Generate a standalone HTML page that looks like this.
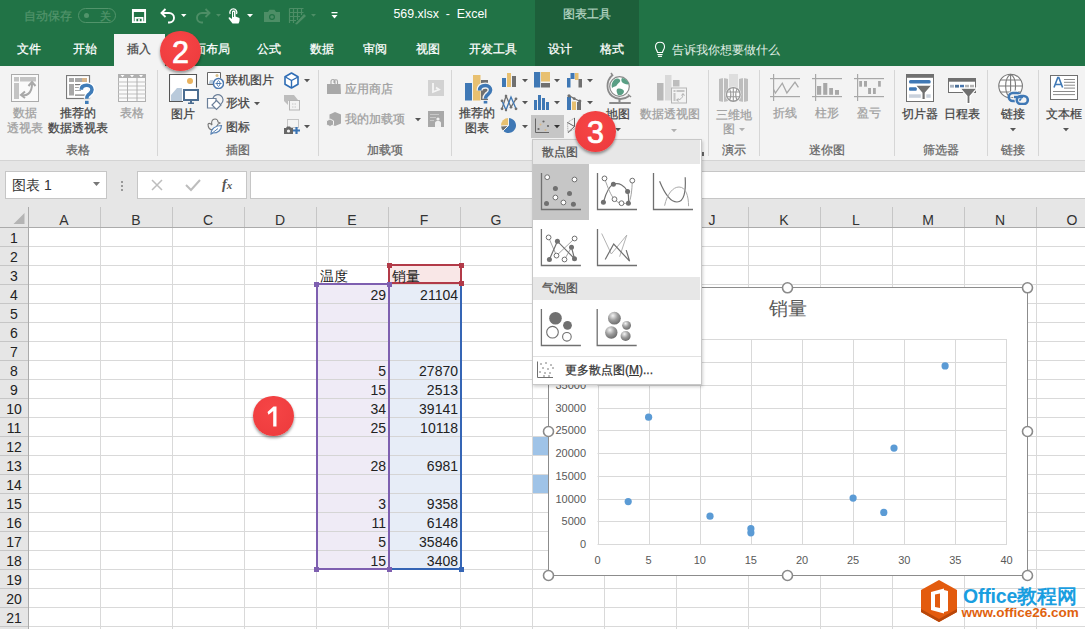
<!DOCTYPE html><html><head><meta charset="utf-8"><style>html,body{margin:0;padding:0;}
body{width:1085px;height:629px;overflow:hidden;position:relative;background:#e6e6e6;font-family:"Liberation Sans", sans-serif;}
.t{position:absolute;white-space:nowrap;line-height:1;}
.s{-webkit-text-stroke:0.25px currentColor;}
.a{position:absolute;}
</style></head><body><div class="a" style="left:0;top:0;width:1085px;height:66px;background:#217346"></div><div class="a" style="left:535px;top:0;width:104px;height:66px;background:#1d5f3a"></div><div class="a" style="left:114px;top:34px;width:51px;height:32px;background:#f3f3f3"></div><div class="a" style="left:0;top:66px;width:1085px;height:94px;background:#f3f3f3"></div><div class="a" style="left:0;top:160px;width:1085px;height:1px;background:#d4d4d4"></div><svg width="1085" height="629" style="position:absolute;left:0;top:0"><rect x="28" y="227" width="1057" height="402" fill="#fff"/><rect x="0" y="207" width="1085" height="20" fill="#e6e6e6"/><rect x="0" y="227" width="28" height="402" fill="#e6e6e6"/><rect x="100" y="227" width="1" height="402" fill="#d9d9d9"/><rect x="100" y="207" width="1" height="20" fill="#c6c6c6"/><rect x="172" y="227" width="1" height="402" fill="#d9d9d9"/><rect x="172" y="207" width="1" height="20" fill="#c6c6c6"/><rect x="244" y="227" width="1" height="402" fill="#d9d9d9"/><rect x="244" y="207" width="1" height="20" fill="#c6c6c6"/><rect x="316" y="227" width="1" height="402" fill="#d9d9d9"/><rect x="316" y="207" width="1" height="20" fill="#c6c6c6"/><rect x="388" y="227" width="1" height="402" fill="#d9d9d9"/><rect x="388" y="207" width="1" height="20" fill="#c6c6c6"/><rect x="460" y="227" width="1" height="402" fill="#d9d9d9"/><rect x="460" y="207" width="1" height="20" fill="#c6c6c6"/><rect x="532" y="227" width="1" height="402" fill="#d9d9d9"/><rect x="532" y="207" width="1" height="20" fill="#c6c6c6"/><rect x="604" y="227" width="1" height="402" fill="#d9d9d9"/><rect x="604" y="207" width="1" height="20" fill="#c6c6c6"/><rect x="676" y="227" width="1" height="402" fill="#d9d9d9"/><rect x="676" y="207" width="1" height="20" fill="#c6c6c6"/><rect x="748" y="227" width="1" height="402" fill="#d9d9d9"/><rect x="748" y="207" width="1" height="20" fill="#c6c6c6"/><rect x="820" y="227" width="1" height="402" fill="#d9d9d9"/><rect x="820" y="207" width="1" height="20" fill="#c6c6c6"/><rect x="892" y="227" width="1" height="402" fill="#d9d9d9"/><rect x="892" y="207" width="1" height="20" fill="#c6c6c6"/><rect x="964" y="227" width="1" height="402" fill="#d9d9d9"/><rect x="964" y="207" width="1" height="20" fill="#c6c6c6"/><rect x="1036" y="227" width="1" height="402" fill="#d9d9d9"/><rect x="1036" y="207" width="1" height="20" fill="#c6c6c6"/><rect x="28" y="246" width="1057" height="1" fill="#d9d9d9"/><rect x="0" y="246" width="28" height="1" fill="#c6c6c6"/><rect x="28" y="265" width="1057" height="1" fill="#d9d9d9"/><rect x="0" y="265" width="28" height="1" fill="#c6c6c6"/><rect x="28" y="284" width="1057" height="1" fill="#d9d9d9"/><rect x="0" y="284" width="28" height="1" fill="#c6c6c6"/><rect x="28" y="303" width="1057" height="1" fill="#d9d9d9"/><rect x="0" y="303" width="28" height="1" fill="#c6c6c6"/><rect x="28" y="322" width="1057" height="1" fill="#d9d9d9"/><rect x="0" y="322" width="28" height="1" fill="#c6c6c6"/><rect x="28" y="341" width="1057" height="1" fill="#d9d9d9"/><rect x="0" y="341" width="28" height="1" fill="#c6c6c6"/><rect x="28" y="360" width="1057" height="1" fill="#d9d9d9"/><rect x="0" y="360" width="28" height="1" fill="#c6c6c6"/><rect x="28" y="379" width="1057" height="1" fill="#d9d9d9"/><rect x="0" y="379" width="28" height="1" fill="#c6c6c6"/><rect x="28" y="398" width="1057" height="1" fill="#d9d9d9"/><rect x="0" y="398" width="28" height="1" fill="#c6c6c6"/><rect x="28" y="417" width="1057" height="1" fill="#d9d9d9"/><rect x="0" y="417" width="28" height="1" fill="#c6c6c6"/><rect x="28" y="436" width="1057" height="1" fill="#d9d9d9"/><rect x="0" y="436" width="28" height="1" fill="#c6c6c6"/><rect x="28" y="455" width="1057" height="1" fill="#d9d9d9"/><rect x="0" y="455" width="28" height="1" fill="#c6c6c6"/><rect x="28" y="474" width="1057" height="1" fill="#d9d9d9"/><rect x="0" y="474" width="28" height="1" fill="#c6c6c6"/><rect x="28" y="493" width="1057" height="1" fill="#d9d9d9"/><rect x="0" y="493" width="28" height="1" fill="#c6c6c6"/><rect x="28" y="512" width="1057" height="1" fill="#d9d9d9"/><rect x="0" y="512" width="28" height="1" fill="#c6c6c6"/><rect x="28" y="531" width="1057" height="1" fill="#d9d9d9"/><rect x="0" y="531" width="28" height="1" fill="#c6c6c6"/><rect x="28" y="550" width="1057" height="1" fill="#d9d9d9"/><rect x="0" y="550" width="28" height="1" fill="#c6c6c6"/><rect x="28" y="569" width="1057" height="1" fill="#d9d9d9"/><rect x="0" y="569" width="28" height="1" fill="#c6c6c6"/><rect x="28" y="588" width="1057" height="1" fill="#d9d9d9"/><rect x="0" y="588" width="28" height="1" fill="#c6c6c6"/><rect x="28" y="607" width="1057" height="1" fill="#d9d9d9"/><rect x="0" y="607" width="28" height="1" fill="#c6c6c6"/><rect x="28" y="626" width="1057" height="1" fill="#d9d9d9"/><rect x="0" y="626" width="28" height="1" fill="#c6c6c6"/><rect x="0" y="227" width="1085" height="1" fill="#ababab"/><rect x="28" y="207" width="1" height="422" fill="#ababab"/><polygon points="24.5,213 24.5,224 13.5,224" fill="#b4b4b4"/></svg><div class="t s" style="left:24px;top:16px;font-size:12px;color:#52946b;font-weight:normal;transform:translateY(-50%);">自动保存</div><div class="a" style="left:78px;top:8px;width:38px;height:15px;border:1px solid #52946b;border-radius:9px;box-sizing:border-box"></div><div class="a" style="left:84px;top:13px;width:5px;height:5px;background:#52946b;border-radius:50%"></div><div class="t s" style="left:99.5px;top:16px;font-size:11px;color:#52946b;font-weight:normal;transform:translateY(-50%);">关</div><div class="t" style="left:440.3px;top:13.5px;font-size:12.4px;color:#fff;font-weight:normal;transform:translate(-50%,-50%);">569.xlsx&nbsp; -&nbsp; Excel</div><div class="t s" style="left:587px;top:14px;font-size:12px;color:#b5d5c2;font-weight:normal;transform:translate(-50%,-50%);">图表工具</div><div class="t s" style="left:29px;top:49px;font-size:12px;color:#fff;font-weight:normal;transform:translate(-50%,-50%);">文件</div><div class="t s" style="left:85px;top:49px;font-size:12px;color:#fff;font-weight:normal;transform:translate(-50%,-50%);">开始</div><div class="t s" style="left:139px;top:49px;font-size:12px;color:#444;font-weight:normal;transform:translate(-50%,-50%);">插入</div><div class="t s" style="left:212px;top:49px;font-size:12px;color:#fff;font-weight:normal;transform:translate(-50%,-50%);">面布局</div><div class="t s" style="left:269px;top:49px;font-size:12px;color:#fff;font-weight:normal;transform:translate(-50%,-50%);">公式</div><div class="t s" style="left:322px;top:49px;font-size:12px;color:#fff;font-weight:normal;transform:translate(-50%,-50%);">数据</div><div class="t s" style="left:375px;top:49px;font-size:12px;color:#fff;font-weight:normal;transform:translate(-50%,-50%);">审阅</div><div class="t s" style="left:428px;top:49px;font-size:12px;color:#fff;font-weight:normal;transform:translate(-50%,-50%);">视图</div><div class="t s" style="left:493px;top:49px;font-size:12px;color:#fff;font-weight:normal;transform:translate(-50%,-50%);">开发工具</div><div class="t s" style="left:560px;top:49px;font-size:12px;color:#fff;font-weight:normal;transform:translate(-50%,-50%);">设计</div><div class="t s" style="left:612px;top:49px;font-size:12px;color:#fff;font-weight:normal;transform:translate(-50%,-50%);">格式</div><div class="t" style="left:672px;top:49.5px;font-size:12px;color:#e3f0e8;transform:translateY(-50%)">告诉我你想要做什么</div><div class="t s" style="left:25px;top:113px;font-size:12px;color:#a0a0a0;font-weight:normal;transform:translate(-50%,-50%);">数据</div><div class="t s" style="left:25px;top:128px;font-size:12px;color:#a0a0a0;font-weight:normal;transform:translate(-50%,-50%);">透视表</div><div class="t s" style="left:78px;top:113px;font-size:12px;color:#444;font-weight:normal;transform:translate(-50%,-50%);">推荐的</div><div class="t s" style="left:78px;top:128px;font-size:12px;color:#444;font-weight:normal;transform:translate(-50%,-50%);">数据透视表</div><div class="t s" style="left:132px;top:113px;font-size:12px;color:#a0a0a0;font-weight:normal;transform:translate(-50%,-50%);">表格</div><div class="t s" style="left:78px;top:149.5px;font-size:12px;color:#666;font-weight:normal;transform:translate(-50%,-50%);">表格</div><div class="t s" style="left:183px;top:114px;font-size:12px;color:#444;font-weight:normal;transform:translate(-50%,-50%);">图片</div><div class="t s" style="left:226px;top:80px;font-size:12px;color:#444;font-weight:normal;transform:translateY(-50%);">联机图片</div><div class="t s" style="left:226px;top:103px;font-size:12px;color:#444;font-weight:normal;transform:translateY(-50%);">形状</div><div class="t s" style="left:226px;top:126.5px;font-size:12px;color:#444;font-weight:normal;transform:translateY(-50%);">图标</div><div class="t s" style="left:238px;top:149.5px;font-size:12px;color:#666;font-weight:normal;transform:translate(-50%,-50%);">插图</div><div class="t s" style="left:345px;top:89px;font-size:12px;color:#a0a0a0;font-weight:normal;transform:translateY(-50%);">应用商店</div><div class="t s" style="left:345px;top:119px;font-size:12px;color:#a0a0a0;font-weight:normal;transform:translateY(-50%);">我的加载项</div><div class="t s" style="left:385px;top:149.5px;font-size:12px;color:#666;font-weight:normal;transform:translate(-50%,-50%);">加载项</div><div class="t s" style="left:477px;top:113px;font-size:12px;color:#444;font-weight:normal;transform:translate(-50%,-50%);">推荐的</div><div class="t s" style="left:477px;top:128px;font-size:12px;color:#444;font-weight:normal;transform:translate(-50%,-50%);">图表</div><div class="t s" style="left:618px;top:114px;font-size:12px;color:#444;font-weight:normal;transform:translate(-50%,-50%);">地图</div><div class="t s" style="left:670px;top:114px;font-size:12px;color:#a0a0a0;font-weight:normal;transform:translate(-50%,-50%);">数据透视图</div><div class="t s" style="left:734px;top:114.5px;font-size:12px;color:#a0a0a0;font-weight:normal;transform:translate(-50%,-50%);">三维地</div><div class="t s" style="left:729px;top:129px;font-size:12px;color:#a0a0a0;font-weight:normal;transform:translate(-50%,-50%);">图</div><div class="t s" style="left:734px;top:149.5px;font-size:12px;color:#666;font-weight:normal;transform:translate(-50%,-50%);">演示</div><div class="t s" style="left:785px;top:113px;font-size:12px;color:#a0a0a0;font-weight:normal;transform:translate(-50%,-50%);">折线</div><div class="t s" style="left:827px;top:113px;font-size:12px;color:#a0a0a0;font-weight:normal;transform:translate(-50%,-50%);">柱形</div><div class="t s" style="left:869px;top:113px;font-size:12px;color:#a0a0a0;font-weight:normal;transform:translate(-50%,-50%);">盈亏</div><div class="t s" style="left:827px;top:149.5px;font-size:12px;color:#666;font-weight:normal;transform:translate(-50%,-50%);">迷你图</div><div class="t s" style="left:920px;top:113.5px;font-size:12px;color:#444;font-weight:normal;transform:translate(-50%,-50%);">切片器</div><div class="t s" style="left:962px;top:113.5px;font-size:12px;color:#444;font-weight:normal;transform:translate(-50%,-50%);">日程表</div><div class="t s" style="left:941px;top:149.5px;font-size:12px;color:#666;font-weight:normal;transform:translate(-50%,-50%);">筛选器</div><div class="t s" style="left:1013px;top:113.5px;font-size:12px;color:#444;font-weight:normal;transform:translate(-50%,-50%);">链接</div><div class="t s" style="left:1013px;top:149.5px;font-size:12px;color:#666;font-weight:normal;transform:translate(-50%,-50%);">链接</div><div class="t s" style="left:1064px;top:113.5px;font-size:12px;color:#444;font-weight:normal;transform:translate(-50%,-50%);">文本框</div><div class="a" style="left:157px;top:70px;width:1px;height:86px;background:#d6d6d6"></div><div class="a" style="left:318px;top:70px;width:1px;height:86px;background:#d6d6d6"></div><div class="a" style="left:451px;top:70px;width:1px;height:86px;background:#d6d6d6"></div><div class="a" style="left:708px;top:70px;width:1px;height:86px;background:#d6d6d6"></div><div class="a" style="left:759px;top:70px;width:1px;height:86px;background:#d6d6d6"></div><div class="a" style="left:894px;top:70px;width:1px;height:86px;background:#d6d6d6"></div><div class="a" style="left:987px;top:70px;width:1px;height:86px;background:#d6d6d6"></div><div class="a" style="left:1038px;top:70px;width:1px;height:86px;background:#d6d6d6"></div><svg class="a" style="left:11px;top:74px" width="29" height="28" viewBox="0 0 29 28"><rect x="0.5" y="0.5" width="27" height="27" fill="#fafafa" stroke="#ababab"/><rect x="3" y="3" width="5" height="4.5" fill="#c4c4c4"/><rect x="9" y="3" width="16" height="4.5" fill="#c4c4c4"/><rect x="3" y="9" width="5" height="16" fill="#c4c4c4"/><path d="M11,21 C15,22 21,20 21,10" stroke="#a8a8a8" stroke-width="2" fill="none"/><path d="M17.5,12 L21,8 L24.5,12" stroke="#a8a8a8" stroke-width="2" fill="none"/><path d="M14,17.5 L10,21 L14,24" stroke="#a8a8a8" stroke-width="2" fill="none"/></svg><svg class="a" style="left:66px;top:75px" width="30" height="30" viewBox="0 0 30 30"><rect x="0.5" y="0.5" width="23" height="23" fill="#fff" stroke="#7a7a7a" stroke-width="1.2"/><rect x="3" y="3" width="5" height="4" fill="#a8a8a8"/><rect x="9" y="3" width="12" height="4" fill="#a8a8a8"/><rect x="16" y="3" width="5" height="4" fill="#d7b48a"/><rect x="3" y="9" width="5" height="11.5" fill="#a8a8a8"/><rect x="9" y="9" width="10" height="1.2" fill="#7a7a7a"/><rect x="9" y="12" width="6" height="1" fill="#a8a8a8"/><rect x="9" y="15" width="6" height="1" fill="#a8a8a8"/><rect x="9" y="19.5" width="10" height="1.2" fill="#7a7a7a"/><path d="M15.3,14.8 C15.3,11.2 17.8,10.3 20.8,10.3 C24,10.3 26,12.2 26,14.8 C26,17.6 23.6,18.6 22.1,20 C21,21 20.8,22 20.8,23.8" stroke="#fff" stroke-width="6" fill="none"/><path d="M15.3,14.8 C15.3,11.2 17.8,10.3 20.8,10.3 C24,10.3 26,12.2 26,14.8 C26,17.6 23.6,18.6 22.1,20 C21,21 20.8,22 20.8,23.8" stroke="#3f7cb8" stroke-width="3.6" fill="none"/><rect x="19" y="25.8" width="3.6" height="3.2" fill="#3f7cb8"/></svg><svg class="a" style="left:118px;top:74px" width="28" height="28" viewBox="0 0 28 28"><rect x="0.5" y="0.5" width="27" height="27" fill="#fafafa" stroke="#b0b0b0"/><rect x="0" y="0" width="28" height="4" fill="#b0b0b0"/><polygon points="2.5,1 6.5,1 4.5,3.2" fill="#fff"/><polygon points="12,1 16,1 14,3.2" fill="#fff"/><polygon points="21,1 25,1 23,3.2" fill="#fff"/><rect x="0" y="7.5" width="28" height="1" fill="#c0c0c0"/><rect x="0" y="11.5" width="28" height="1" fill="#c0c0c0"/><rect x="0" y="15.5" width="28" height="1" fill="#c0c0c0"/><rect x="0" y="19.5" width="28" height="1" fill="#c0c0c0"/><rect x="0" y="23.5" width="28" height="1" fill="#c0c0c0"/><rect x="9" y="4" width="1" height="24" fill="#b0b0b0"/><rect x="18.5" y="4" width="1" height="24" fill="#b0b0b0"/></svg><svg class="a" style="left:169px;top:74px" width="31" height="31" viewBox="0 0 31 31"><path d="M14,27.5 H0.5 V0.5 H27.5 V13.5" fill="#fff" stroke="#555" stroke-width="1.1"/><circle cx="21" cy="7" r="3" fill="#e9b35f"/><path d="M2,27 L2,21 L8,14 L13,14 L13,27 Z" fill="#b9cadb"/><rect x="15" y="16" width="14" height="10" fill="#fff" stroke="#4b6d91" stroke-width="2"/><rect x="19" y="28.5" width="6" height="1.5" fill="#4b6d91"/><rect x="21" y="27" width="2" height="2" fill="#4b6d91"/></svg><svg class="a" style="left:206px;top:71px" width="18" height="18" viewBox="0 0 18 18"><path d="M8,13.5 H1.5 V1.5 H14.5 V7" fill="#fff" stroke="#666" stroke-width="1"/><circle cx="11" cy="4.5" r="1.5" fill="#d9c08a"/><path d="M2.5,13 L4,9 L7,9 L8,13 Z" fill="#b9cadb"/><circle cx="12.5" cy="12.5" r="5" fill="#fff" stroke="#4a78b0" stroke-width="1.5"/><path d="M9.5,12.5 H15.5 M12.5,9.5 C10.5,11 10.5,14 12.5,15.5 M12.5,9.5 C14.5,11 14.5,14 12.5,15.5" stroke="#4a78b0" stroke-width="1" fill="none"/></svg><svg class="a" style="left:206px;top:94px" width="18" height="17" viewBox="0 0 18 17"><path d="M1.5,4.5 H10 V14 H1.5 Z" fill="#fff" stroke="#6b7f99" stroke-width="1.2"/><path d="M7,4 A5.2,5.2 0 1 1 15,10" fill="none" stroke="#6b7f99" stroke-width="1.2"/><path d="M10.5,6.5 L15,11 L10.5,15.5 L6,11 Z" fill="#fff" stroke="#6b7f99" stroke-width="1.2"/></svg><svg class="a" style="left:206px;top:117px" width="18" height="18" viewBox="0 0 18 18"><path d="M2,7 C3,6 5,7 6,8 C5,5 6,2 9,2 C11,2 12,4 12,5 L14,6 L12,7 C12,8 11,9 10,10" fill="none" stroke="#777" stroke-width="1.1"/><path d="M2,7 C2,11 4,13 7,13" fill="none" stroke="#777" stroke-width="1.1"/><path d="M5,17 C5,12 9,8.5 15.5,8.5 C15.5,13 12,16 7,16 Z" fill="#fff" stroke="#5a84b5" stroke-width="1.2"/><path d="M5,17 L12,11.5" stroke="#5a84b5" stroke-width="1"/></svg><svg class="a" style="left:284px;top:72px" width="16" height="17" viewBox="0 0 16 17"><path d="M7.5,1 L14,4.7 V12.2 L7.5,16 L1,12.2 V4.7 Z" fill="#fff" stroke="#2f6db5" stroke-width="1.6" stroke-linejoin="round"/><path d="M1.5,5 L7.5,8.5 L14,5 M7.5,8.5 V15.5" fill="none" stroke="#2f6db5" stroke-width="1.4"/></svg><svg class="a" style="left:284px;top:94px" width="17" height="17" viewBox="0 0 17 17"><polygon points="0,1 10,1 14,6 14,7 4,7 4,11 0,7" fill="#bdbdbd"/><rect x="5.5" y="6.5" width="10" height="9.5" fill="#f3f3f3" stroke="#b5b5b5" stroke-width="1"/><path d="M8,10 H13 M8,13 H13" stroke="#c8c8c8" stroke-width="1" stroke-dasharray="1.5,1"/></svg><svg class="a" style="left:283px;top:119px" width="18" height="16" viewBox="0 0 18 16"><rect x="4.5" y="0.5" width="11" height="8" fill="none" stroke="#999" stroke-width="1" stroke-dasharray="1,1"/><path d="M1,9 H3 L4,7.5 H7 L8,9 H10 V15 H1 Z" fill="#666"/><circle cx="5.5" cy="12" r="1.6" fill="#f3f3f3"/><path d="M13.5,8 V15 M10,11.5 H17" stroke="#3a74b4" stroke-width="2.2"/></svg><svg class="a" style="left:303.5px;top:79px" width="6" height="4" viewBox="0 0 6 4"><polygon points="0,0 6,0 3,3.2" fill="#555"/></svg><svg class="a" style="left:303.5px;top:125px" width="6" height="4" viewBox="0 0 6 4"><polygon points="0,0 6,0 3,3.2" fill="#555"/></svg><svg class="a" style="left:254px;top:101.5px" width="6" height="4" viewBox="0 0 6 4"><polygon points="0,0 6,0 3,3.2" fill="#555"/></svg><svg class="a" style="left:326px;top:78px" width="16" height="17" viewBox="0 0 16 17"><path d="M5,6 V3.5 C5,2 6,1.5 7,1.5 C8,1.5 9,2 9,3.5 V6 M8,5 V3 C8,2 9,1.8 10,1.8 C11,1.8 11.5,2.5 11.5,3.5 V6" fill="none" stroke="#a8a8a8" stroke-width="1.1"/><path d="M1,6 L14.5,6 L15,16 L1,16 Z" fill="#a8a8a8"/></svg><svg class="a" style="left:326px;top:111px" width="16" height="16" viewBox="0 0 16 16"><path d="M9,1 L15,3.5 V12.5 L9,15 L3.5,12.5 V3.5 Z" fill="#a8a8a8"/><path d="M4,8 L7.5,9.8 V13.8 L4,15.5 L0.5,13.8 V9.8 Z" fill="#a8a8a8" stroke="#f3f3f3" stroke-width="1"/></svg><svg class="a" style="left:428px;top:80px" width="16" height="16" viewBox="0 0 16 16"><rect width="16" height="16" fill="#d2d2d2"/><path d="M5,3 V12 L11,9.5 L8,7.5" fill="none" stroke="#f5f5f5" stroke-width="1.8"/></svg><svg class="a" style="left:428px;top:111px" width="16" height="16" viewBox="0 0 16 16"><rect width="16" height="16" fill="#a8a8a8"/><rect x="2" y="3" width="9" height="1" fill="#c8c8c8"/><rect x="2" y="6" width="6" height="1" fill="#c8c8c8"/><rect x="2" y="9" width="4" height="1" fill="#c8c8c8"/><circle cx="10" cy="8" r="1.6" fill="#f0f0f0"/><path d="M7,16 V12 C7,10.5 8.5,10 10,10 C11.5,10 13,10.5 13,12 V16 Z" fill="#f0f0f0"/></svg><svg class="a" style="left:415px;top:117.5px" width="6" height="4" viewBox="0 0 6 4"><polygon points="0,0 6,0 3,3.2" fill="#555"/></svg><svg class="a" style="left:464px;top:74px" width="31" height="31" viewBox="0 0 31 31"><rect x="1" y="9" width="7" height="17.5" fill="#3f78b5"/><rect x="9" y="1" width="7.5" height="25.5" fill="#e8c070"/><rect x="17" y="6" width="7" height="20" fill="#707070"/><path d="M15.6,16.6 C15.6,12.6 18.2,11.6 21.5,11.6 C24.8,11.6 26.6,13.6 26.6,16.1 C26.6,19 24.3,20 22.8,21.4 C21.8,22.4 21.4,23.4 21.4,24.8" stroke="#f3f3f3" stroke-width="6.2" fill="none"/><path d="M15.6,16.6 C15.6,12.6 18.2,11.6 21.5,11.6 C24.8,11.6 26.6,13.6 26.6,16.1 C26.6,19 24.3,20 22.8,21.4 C21.8,22.4 21.4,23.4 21.4,24.8" stroke="#3f78b5" stroke-width="3.5" fill="none"/><rect x="19.7" y="26.9" width="3.6" height="2.6" fill="#3f78b5"/></svg><svg class="a" style="left:501px;top:72px" width="16" height="16" viewBox="0 0 16 16"><rect x="1" y="6" width="4" height="9" fill="#3f78b5"/><rect x="6" y="1" width="4" height="14" fill="#e8c070"/><rect x="11" y="4" width="4" height="11" fill="#707070"/></svg><svg class="a" style="left:521.5px;top:79px" width="6" height="4" viewBox="0 0 6 4"><polygon points="0,0 6,0 3,3.2" fill="#555"/></svg><svg class="a" style="left:499px;top:93px" width="20" height="19" viewBox="0 0 20 19"><path d="M3,15.8 L7,3 L12,14.2 L17,5.8" fill="none" stroke="#707070" stroke-width="1.3"/><path d="M3,7.8 L7,17 L12,4 L17,15.8" fill="none" stroke="#3f78b5" stroke-width="1.3"/><circle cx="3" cy="7.8" r="1.4" fill="#707070"/><circle cx="3" cy="15.8" r="1.4" fill="#707070"/><circle cx="7" cy="3" r="1.3" fill="#707070"/><circle cx="12" cy="14.2" r="1.3" fill="#707070"/><circle cx="17" cy="5.8" r="1.4" fill="#707070"/><circle cx="17" cy="15.8" r="1.4" fill="#707070"/><circle cx="7" cy="17" r="1.2" fill="#707070"/></svg><svg class="a" style="left:521.5px;top:101px" width="6" height="4" viewBox="0 0 6 4"><polygon points="0,0 6,0 3,3.2" fill="#555"/></svg><svg class="a" style="left:500px;top:117px" width="17" height="17" viewBox="0 0 17 17"><path d="M8.5,8.5 L8.5,1 A7.5,7.5 0 1 1 3.2,13.8 Z" fill="#3f78b5"/><path d="M8.5,8.5 L1,9 A7.5,7.5 0 0 1 8.5,1 Z" fill="#e8c070"/><path d="M8.5,8.5 L3.2,13.8 A7.5,7.5 0 0 1 1,9 Z" fill="#707070"/><path d="M8.5,0.5 V8.5 L0.5,9 M8.5,8.5 L2.8,14.2" stroke="#f3f3f3" stroke-width="1" fill="none"/></svg><svg class="a" style="left:521.5px;top:124.5px" width="6" height="4" viewBox="0 0 6 4"><polygon points="0,0 6,0 3,3.2" fill="#555"/></svg><svg class="a" style="left:533px;top:72px" width="18" height="16" viewBox="0 0 18 16"><rect x="1" y="0" width="6.2" height="15.5" fill="#3f78b5"/><rect x="8" y="0" width="9" height="9.5" fill="#e8c070"/><rect x="8" y="11" width="9" height="4.5" fill="#707070"/></svg><svg class="a" style="left:554px;top:79px" width="6" height="4" viewBox="0 0 6 4"><polygon points="0,0 6,0 3,3.2" fill="#555"/></svg><svg class="a" style="left:566px;top:72px" width="18" height="16" viewBox="0 0 18 16"><rect x="1" y="6" width="3.5" height="9.5" fill="#3f78b5"/><rect x="4.5" y="1" width="4" height="6" fill="#3f78b5"/><rect x="9" y="1" width="3.5" height="7" fill="#e8c070"/><rect x="12.5" y="7" width="3.5" height="8.5" fill="#707070"/></svg><svg class="a" style="left:587px;top:79px" width="6" height="4" viewBox="0 0 6 4"><polygon points="0,0 6,0 3,3.2" fill="#555"/></svg><svg class="a" style="left:533px;top:95px" width="18" height="16" viewBox="0 0 18 16"><rect x="1" y="5" width="3" height="10" fill="#3f78b5"/><rect x="5" y="0" width="3" height="15" fill="#3f78b5"/><rect x="9" y="3" width="3" height="12" fill="#3f78b5"/><rect x="13" y="7" width="3" height="8" fill="#3f78b5"/></svg><svg class="a" style="left:554px;top:101px" width="6" height="4" viewBox="0 0 6 4"><polygon points="0,0 6,0 3,3.2" fill="#555"/></svg><svg class="a" style="left:566px;top:94px" width="18" height="17" viewBox="0 0 18 17"><rect x="1" y="3" width="4" height="13" fill="#3f78b5"/><rect x="6" y="7.5" width="4" height="8.5" fill="#e8c070"/><rect x="11" y="8" width="4" height="8" fill="#707070"/><path d="M3,1.5 L8,4.5 L13.5,7" fill="none" stroke="#707070" stroke-width="1.2"/><circle cx="3" cy="1.8" r="1.6" fill="#707070"/><circle cx="8.2" cy="4.6" r="1.4" fill="#707070"/><circle cx="13.8" cy="7" r="1.6" fill="#707070"/></svg><svg class="a" style="left:587px;top:101px" width="6" height="4" viewBox="0 0 6 4"><polygon points="0,0 6,0 3,3.2" fill="#555"/></svg><div class="a" style="left:531px;top:115px;width:33px;height:23px;background:#c6c6c6"></div><svg class="a" style="left:534px;top:118px" width="18" height="16" viewBox="0 0 18 16"><path d="M1.5,0.5 V14.5 H15" fill="none" stroke="#666" stroke-width="1"/><circle cx="9.5" cy="3.5" r="1.1" fill="#666"/><circle cx="14" cy="8" r="1.1" fill="#666"/><circle cx="4.5" cy="11" r="1.1" fill="#666"/><circle cx="6.5" cy="6.5" r="1" fill="#d9b98a"/><circle cx="11.5" cy="12" r="1" fill="#d9b98a"/></svg><svg class="a" style="left:553.5px;top:124.5px" width="6" height="4" viewBox="0 0 6 4"><polygon points="0,0 6,0 3,3.2" fill="#333"/></svg><svg class="a" style="left:564px;top:115px" width="16" height="20" viewBox="0 0 16 20"><path d="M3.5,7.5 L10.5,3 M3.5,7.5 L4,17.5 M4,17.5 L12,13" fill="none" stroke="#999" stroke-width="0.8" stroke-dasharray="1.2,0.6"/><path d="M10.5,3 V11.5 L3.5,7.5 M10.5,11.5 L4,17.5" fill="none" stroke="#5a5a5a" stroke-width="0.95"/></svg><svg class="a" style="left:606px;top:72px" width="28" height="33" viewBox="0 0 28 33"><circle cx="13.5" cy="14.5" r="9.8" fill="#fff" stroke="#8a8a8a" stroke-width="1.2"/><path d="M8,8 C10,6 13,6 14,8 C15,10 12,11 11,13 C10,15 8,14 6,16 C5,13 6,10 8,8 Z" fill="#5a9f85"/><path d="M16,6 C19,6 22,9 23,12 C21,13 19,12 17,11 C15,10 15,7 16,6 Z" fill="#5a9f85"/><path d="M11,17 C14,16 17,17 18,19 C18,22 15,24 12,23 C11,21 10,19 11,17 Z" fill="#5a9f85"/><path d="M6,3.5 C0,9 0,19 6,24 C11,28 18,28 23,24" fill="none" stroke="#8a8a8a" stroke-width="1.8"/><path d="M5,1 L7,4" stroke="#8a8a8a" stroke-width="1.5"/><path d="M22,22.5 L25,25" stroke="#8a8a8a" stroke-width="1.5"/><rect x="12.5" y="26" width="2" height="4" fill="#8a8a8a"/><rect x="3" y="30" width="22" height="2" rx="1" fill="#8a8a8a"/></svg><svg class="a" style="left:656px;top:74px" width="32" height="31" viewBox="0 0 32 31"><rect x="1" y="9" width="6.5" height="17.5" fill="#b8b8b8"/><rect x="9" y="1" width="6.5" height="25.5" fill="#d9d9d9"/><rect x="17" y="6" width="6.5" height="6.5" fill="#bdbdbd"/><rect x="15.5" y="14" width="15" height="15" fill="#f3f3f3" stroke="#b5b5b5" stroke-width="1"/><rect x="17.5" y="16" width="2" height="2" fill="#c4c4c4"/><rect x="20.5" y="16" width="8" height="2" fill="#c4c4c4"/><rect x="17.5" y="19" width="2" height="8" fill="#c4c4c4"/><path d="M21,26 C24,26 27,24 27,20 M25.5,21.5 L27,19.5 L28.5,21.5 M22.5,24.5 L20.5,26 L22.5,27.5" fill="none" stroke="#b0b0b0" stroke-width="1"/></svg><svg class="a" style="left:718px;top:73px" width="32" height="30" viewBox="0 0 32 30"><rect x="11" y="1" width="9" height="14" fill="#dedede"/><path d="M1,6 C3,5 8,5 10,6 V28 C8,29 3,29 1,28 Z" fill="#bdbdbd"/><rect x="5" y="5" width="1" height="24" fill="#f3f3f3"/><path d="M21,6 C23,5 28,5 30,6 V28 C28,29 23,29 21,28 Z" fill="#bdbdbd"/><rect x="25" y="5" width="1" height="24" fill="#f3f3f3"/><circle cx="15.3" cy="21.4" r="8" fill="#f3f3f3"/><circle cx="15.3" cy="21.4" r="6.8" fill="#fff" stroke="#9a9a9a" stroke-width="1.4"/><path d="M8.5,19 H22 M8.5,23.8 H22 M15.3,14.6 V28.2 M11.5,15.6 C13,19 13,24 11.5,27 M19,15.6 C17.6,19 17.6,24 19,27" fill="none" stroke="#9a9a9a" stroke-width="1.1"/></svg><svg class="a" style="left:769px;top:73px" width="33" height="29" viewBox="0 0 33 29"><rect x="4" y="1" width="1.2" height="27" fill="#a8a8a8"/><rect x="1" y="5" width="30" height="1.2" fill="#a8a8a8"/><rect x="1" y="23" width="30" height="1.2" fill="#a8a8a8"/><path d="M4.6,16.5 L6.4,20 L13.3,10.2 L17.9,20 L26,9.1 L29.4,14.3" fill="none" stroke="#a8a8a8" stroke-width="1.3"/></svg><svg class="a" style="left:811px;top:73px" width="33" height="29" viewBox="0 0 33 29"><rect x="4" y="1" width="1.2" height="27" fill="#a8a8a8"/><rect x="1" y="5" width="30" height="1.2" fill="#a8a8a8"/><rect x="1" y="23" width="30" height="1.2" fill="#a8a8a8"/><rect x="6" y="13" width="4.2" height="8.8" fill="#a8a8a8"/><rect x="12.2" y="10" width="4.1" height="11.8" fill="#a8a8a8"/><rect x="18.2" y="15" width="3.8" height="6.8" fill="#a8a8a8"/><rect x="24" y="17" width="4" height="4.8" fill="#a8a8a8"/></svg><svg class="a" style="left:853px;top:73px" width="33" height="29" viewBox="0 0 33 29"><rect x="4" y="1" width="1.2" height="27" fill="#a8a8a8"/><rect x="1" y="5" width="30" height="1.2" fill="#a8a8a8"/><rect x="1" y="23" width="30" height="1.2" fill="#a8a8a8"/><rect x="6.2" y="8" width="2.8" height="5.7" fill="#a8a8a8"/><rect x="11" y="8" width="3" height="5.7" fill="#a8a8a8"/><rect x="25.1" y="8" width="2.7" height="5.7" fill="#a8a8a8"/><rect x="15.1" y="15" width="2.9" height="6" fill="#a8a8a8"/><rect x="20" y="15" width="2.8" height="6" fill="#a8a8a8"/></svg><svg class="a" style="left:905px;top:73px" width="30" height="30" viewBox="0 0 30 30"><rect x="1.5" y="1.5" width="27" height="27" fill="#fff" stroke="#707070" stroke-width="1"/><rect x="1" y="1" width="28" height="3.8" fill="#707070"/><rect x="4" y="7" width="21.7" height="3.4" rx="1.5" fill="#3f78b5"/><rect x="4" y="14.2" width="7.8" height="3.5" rx="1" fill="#3f78b5"/><rect x="4" y="21.3" width="11.8" height="3.5" fill="#c9d1dc"/><rect x="21.3" y="21.3" width="4.4" height="3.5" fill="#c9d1dc"/><path d="M10.3,12.1 H27.1 L20.3,20 V26.7 H16.9 V20 Z" fill="#707070" stroke="#fff" stroke-width="1.2"/></svg><svg class="a" style="left:947px;top:77px" width="32" height="28" viewBox="0 0 32 28"><rect x="1.5" y="1.5" width="27" height="14" fill="#fff" stroke="#707070" stroke-width="1"/><rect x="1" y="1" width="28" height="3.7" fill="#707070"/><rect x="3" y="7.8" width="4" height="2.8" fill="#aab4c0"/><rect x="8" y="7.8" width="4" height="2.8" fill="#4a6f98"/><rect x="13" y="7.8" width="4" height="2.8" fill="#4a78b0"/><rect x="18" y="7.8" width="4" height="2.8" fill="#b4b4b4"/><rect x="23" y="7.8" width="4" height="2.8" fill="#b4b4b4"/><path d="M13,11.2 H30.2 L23,19.2 V26.7 H20 V19.2 Z" fill="#707070" stroke="#fff" stroke-width="1.2"/></svg><svg class="a" style="left:997px;top:73px" width="34" height="32" viewBox="0 0 34 32"><circle cx="13.6" cy="13" r="11.8" fill="#fff" stroke="#7a7a7a" stroke-width="1.1"/><path d="M1.8,13 H25.4 M3.5,7 H23.7 M3.5,19 H23.7 M13.6,1.2 V24.8 M13.6,1.2 C7,5 7,21 13.6,24.8 M13.6,1.2 C20.2,5 20.2,21 13.6,24.8" fill="none" stroke="#7a7a7a" stroke-width="1.1"/><path d="M14,24.5 C13,22 15,20.5 17,20.5 H21 M21,26.5 H17 C15,26.5 13,27 14,24.5" fill="none" stroke="#f3f3f3" stroke-width="6"/><rect x="11.8" y="20" width="12" height="8" rx="4" fill="none" stroke="#3f78b5" stroke-width="2.6"/><rect x="19.8" y="23" width="11" height="8" rx="4" fill="none" stroke="#f3f3f3" stroke-width="4.6"/><rect x="19.8" y="23" width="11" height="8" rx="4" fill="none" stroke="#3f78b5" stroke-width="2.6"/><path d="M17,24 H26" stroke="#3f78b5" stroke-width="2.4"/></svg><svg class="a" style="left:1049px;top:74px" width="30" height="27" viewBox="0 0 30 27"><rect x="1.5" y="1.5" width="27" height="24" fill="#fff" stroke="#707070" stroke-width="1"/><path d="M5,13.5 L8.8,3.5 H9.8 L13.6,13.5 M6.3,10.5 H12.3" fill="none" stroke="#3f78b5" stroke-width="1.6"/><path d="M15,5.5 H26 M15,8.3 H26 M15,11.2 H26 M15,14.1 H26 M4,17.5 H26 M4,20.6 H26" stroke="#8a8a8a" stroke-width="1"/></svg><svg class="a" style="left:1010px;top:127.5px" width="6" height="4" viewBox="0 0 6 4"><polygon points="0,0 6,0 3,3.2" fill="#555"/></svg><svg class="a" style="left:1062.5px;top:127.5px" width="6" height="4" viewBox="0 0 6 4"><polygon points="0,0 6,0 3,3.2" fill="#555"/></svg><svg class="a" style="left:615px;top:127.5px" width="6" height="4" viewBox="0 0 6 4"><polygon points="0,0 6,0 3,3.2" fill="#555"/></svg><svg class="a" style="left:671px;top:129px" width="6" height="4" viewBox="0 0 6 4"><polygon points="0,0 6,0 3,3.2" fill="#b0b0b0"/></svg><svg class="a" style="left:739px;top:128px" width="6" height="4" viewBox="0 0 6 4"><polygon points="0,0 6,0 3,3.2" fill="#b0b0b0"/></svg><svg class="a" style="left:131px;top:8px" width="16" height="16" viewBox="0 0 16 16"><path d="M1.9,1.9 H14.1 V14.1 H1.9 Z" fill="none" stroke="#fff" stroke-width="1.9"/><rect x="1" y="1" width="14" height="3" fill="#fff"/><path d="M4.5,14.5 V9.8 H11.5 V14.5" fill="none" stroke="#fff" stroke-width="1.8"/><rect x="7.2" y="11" width="1.6" height="3" fill="#fff"/></svg><svg class="a" style="left:159px;top:7px" width="18" height="17" viewBox="0 0 18 17"><path d="M2.5,6 H10 C13,6 15,8 15,10.8 C15,13.6 13,15.5 10.5,15.5 H9" fill="none" stroke="#fff" stroke-width="1.9"/><path d="M6.5,2 L2.5,6 L6.5,10" fill="none" stroke="#fff" stroke-width="1.9"/></svg><svg class="a" style="left:181px;top:14px" width="6" height="4" viewBox="0 0 6 4"><polygon points="0,0 5.5,0 2.75,3" fill="#fff"/></svg><svg class="a" style="left:195px;top:7px" width="18" height="17" viewBox="0 0 18 17"><path d="M14.5,6 H7 C4,6 2,8 2,10.8 C2,13.6 4,15.5 6.5,15.5 H8" fill="none" stroke="#4d8e66" stroke-width="1.9"/><path d="M10.5,2 L14.5,6 L10.5,10" fill="none" stroke="#4d8e66" stroke-width="1.9"/></svg><svg class="a" style="left:216px;top:14px" width="6" height="4" viewBox="0 0 6 4"><polygon points="0,0 5,0 2.5,2.8" fill="#4d8e66"/></svg><svg class="a" style="left:227px;top:7px" width="14" height="18" viewBox="0 0 14 18"><path d="M3.2,7 A3.5,3.5 0 1 1 9.5,7" fill="none" stroke="#fff" stroke-width="1.3"/><path d="M5,4.5 V12 L3,10.5 C2,10 1,11 2,12 L5.5,16.5 H11.5 C12.5,15 12.8,13 12.5,11 L8.5,9.5 V4.5 C8.5,3 5,3 5,4.5 Z" fill="#fff"/><path d="M6.5,5 V10" stroke="#217346" stroke-width="0.9"/></svg><svg class="a" style="left:247px;top:13.5px" width="7" height="4" viewBox="0 0 7 4"><polygon points="0,0 6,0 3,3.2" fill="#fff"/></svg><svg class="a" style="left:263px;top:9px" width="18" height="14" viewBox="0 0 18 14"><path d="M1,3 H5 L6.5,0.8 H11.5 L13,3 H17 V13 H1 Z" fill="#4d8e66"/><circle cx="9" cy="8" r="3" fill="#217346"/><circle cx="9" cy="8" r="1.8" fill="#4d8e66"/></svg><svg class="a" style="left:288px;top:7px" width="19" height="18" viewBox="0 0 19 18"><path d="M1.5,1.5 H15.5 M1.5,5.5 H15.5 M1.5,9.5 H12 M1.5,13.5 H8 M1.5,1.5 V16 M5.5,1.5 V16 M9.5,1.5 V13 M13.5,1.5 V8" fill="none" stroke="#4d8e66" stroke-width="1.2"/><path d="M7,17 L16,7 L18,9 L9,17.5 Z" fill="#4d8e66"/></svg><svg class="a" style="left:310.5px;top:14px" width="6" height="4" viewBox="0 0 6 4"><polygon points="0,0 5,0 2.5,2.8" fill="#4d8e66"/></svg><svg class="a" style="left:331px;top:11px" width="8" height="9" viewBox="0 0 8 9"><rect x="0.5" y="1" width="6" height="1.3" fill="#fff"/><polygon points="0.5,4 6.5,4 3.5,7.5" fill="#fff"/></svg><svg class="a" style="left:654px;top:41px" width="12" height="17" viewBox="0 0 12 17"><path d="M3.5,11.5 C3.5,9.5 1.5,8.5 1.5,5.8 C1.5,3 3.5,1.2 6,1.2 C8.5,1.2 10.5,3 10.5,5.8 C10.5,8.5 8.5,9.5 8.5,11.5 Z" fill="none" stroke="#fff" stroke-width="1.1"/><rect x="3.5" y="13" width="5" height="1.1" fill="#fff"/><rect x="4" y="14.8" width="4" height="1.1" fill="#fff"/></svg><div class="a" style="left:702px;top:152px;width:2px;height:4px;background:#666"></div><div class="a" style="left:5px;top:171px;width:100px;height:26px;background:#fff;border:1px solid #c6c6c6"></div><div class="t" style="left:12px;top:185px;font-size:14px;color:#333;font-weight:normal;transform:translateY(-50%);">图表 1</div><svg class="a" style="left:92.5px;top:182px" width="8" height="5"><polygon points="0,0 7,0 3.5,4" fill="#777"/></svg><div class="a" style="left:121px;top:181px;width:2px;height:2px;background:#999"></div><div class="a" style="left:121px;top:185px;width:2px;height:2px;background:#999"></div><div class="a" style="left:121px;top:189px;width:2px;height:2px;background:#999"></div><div class="a" style="left:137px;top:171px;width:108px;height:26px;background:#fff;border:1px solid #c6c6c6"></div><div class="a" style="left:250px;top:171px;width:840px;height:26px;background:#fff;border:1px solid #c6c6c6"></div><svg class="a" style="left:150px;top:178px" width="14" height="14"><path d="M2,2 L12,12 M12,2 L2,12" stroke="#bdbdbd" stroke-width="1.5"/></svg><svg class="a" style="left:185px;top:178px" width="16" height="14"><path d="M1,7 L6,12 L15,2" stroke="#bdbdbd" stroke-width="2" fill="none"/></svg><div class="t" style="left:222px;top:185px;font-size:14px;color:#555;font-weight:normal;transform:translateY(-50%);font-family:'Liberation Serif',serif;"><i><b>f</b><b style="font-size:11px">x</b></i></div><div class="t" style="left:64px;top:219.5px;font-size:14px;color:#333;font-weight:normal;transform:translate(-50%,-50%);">A</div><div class="t" style="left:136px;top:219.5px;font-size:14px;color:#333;font-weight:normal;transform:translate(-50%,-50%);">B</div><div class="t" style="left:208px;top:219.5px;font-size:14px;color:#333;font-weight:normal;transform:translate(-50%,-50%);">C</div><div class="t" style="left:280px;top:219.5px;font-size:14px;color:#333;font-weight:normal;transform:translate(-50%,-50%);">D</div><div class="t" style="left:352px;top:219.5px;font-size:14px;color:#333;font-weight:normal;transform:translate(-50%,-50%);">E</div><div class="t" style="left:424px;top:219.5px;font-size:14px;color:#333;font-weight:normal;transform:translate(-50%,-50%);">F</div><div class="t" style="left:496px;top:219.5px;font-size:14px;color:#333;font-weight:normal;transform:translate(-50%,-50%);">G</div><div class="t" style="left:568px;top:219.5px;font-size:14px;color:#333;font-weight:normal;transform:translate(-50%,-50%);">H</div><div class="t" style="left:640px;top:219.5px;font-size:14px;color:#333;font-weight:normal;transform:translate(-50%,-50%);">I</div><div class="t" style="left:712px;top:219.5px;font-size:14px;color:#333;font-weight:normal;transform:translate(-50%,-50%);">J</div><div class="t" style="left:784px;top:219.5px;font-size:14px;color:#333;font-weight:normal;transform:translate(-50%,-50%);">K</div><div class="t" style="left:856px;top:219.5px;font-size:14px;color:#333;font-weight:normal;transform:translate(-50%,-50%);">L</div><div class="t" style="left:928px;top:219.5px;font-size:14px;color:#333;font-weight:normal;transform:translate(-50%,-50%);">M</div><div class="t" style="left:1000px;top:219.5px;font-size:14px;color:#333;font-weight:normal;transform:translate(-50%,-50%);">N</div><div class="t" style="left:1072px;top:219.5px;font-size:14px;color:#333;font-weight:normal;transform:translate(-50%,-50%);">O</div><div class="t" style="left:14px;top:238px;font-size:14px;color:#222;font-weight:normal;transform:translate(-50%,-50%);">1</div><div class="t" style="left:14px;top:257px;font-size:14px;color:#222;font-weight:normal;transform:translate(-50%,-50%);">2</div><div class="t" style="left:14px;top:276px;font-size:14px;color:#222;font-weight:normal;transform:translate(-50%,-50%);">3</div><div class="t" style="left:14px;top:295px;font-size:14px;color:#222;font-weight:normal;transform:translate(-50%,-50%);">4</div><div class="t" style="left:14px;top:314px;font-size:14px;color:#222;font-weight:normal;transform:translate(-50%,-50%);">5</div><div class="t" style="left:14px;top:333px;font-size:14px;color:#222;font-weight:normal;transform:translate(-50%,-50%);">6</div><div class="t" style="left:14px;top:352px;font-size:14px;color:#222;font-weight:normal;transform:translate(-50%,-50%);">7</div><div class="t" style="left:14px;top:371px;font-size:14px;color:#222;font-weight:normal;transform:translate(-50%,-50%);">8</div><div class="t" style="left:14px;top:390px;font-size:14px;color:#222;font-weight:normal;transform:translate(-50%,-50%);">9</div><div class="t" style="left:14px;top:409px;font-size:14px;color:#222;font-weight:normal;transform:translate(-50%,-50%);">10</div><div class="t" style="left:14px;top:428px;font-size:14px;color:#222;font-weight:normal;transform:translate(-50%,-50%);">11</div><div class="t" style="left:14px;top:447px;font-size:14px;color:#222;font-weight:normal;transform:translate(-50%,-50%);">12</div><div class="t" style="left:14px;top:466px;font-size:14px;color:#222;font-weight:normal;transform:translate(-50%,-50%);">13</div><div class="t" style="left:14px;top:485px;font-size:14px;color:#222;font-weight:normal;transform:translate(-50%,-50%);">14</div><div class="t" style="left:14px;top:504px;font-size:14px;color:#222;font-weight:normal;transform:translate(-50%,-50%);">15</div><div class="t" style="left:14px;top:523px;font-size:14px;color:#222;font-weight:normal;transform:translate(-50%,-50%);">16</div><div class="t" style="left:14px;top:542px;font-size:14px;color:#222;font-weight:normal;transform:translate(-50%,-50%);">17</div><div class="t" style="left:14px;top:561px;font-size:14px;color:#222;font-weight:normal;transform:translate(-50%,-50%);">18</div><div class="t" style="left:14px;top:580px;font-size:14px;color:#222;font-weight:normal;transform:translate(-50%,-50%);">19</div><div class="t" style="left:14px;top:599px;font-size:14px;color:#222;font-weight:normal;transform:translate(-50%,-50%);">20</div><div class="t" style="left:14px;top:618px;font-size:14px;color:#222;font-weight:normal;transform:translate(-50%,-50%);">21</div><div class="a" style="left:317px;top:285px;width:71px;height:284px;background:#efebf6"></div><div class="a" style="left:390px;top:285px;width:70px;height:284px;background:#e7edf7"></div><div class="a" style="left:390px;top:266px;width:70px;height:18px;background:#f9e7e7"></div><div class="a" style="left:317px;top:303px;width:143px;height:1px;background:#d5d5d5"></div><div class="a" style="left:317px;top:322px;width:143px;height:1px;background:#d5d5d5"></div><div class="a" style="left:317px;top:341px;width:143px;height:1px;background:#d5d5d5"></div><div class="a" style="left:317px;top:360px;width:143px;height:1px;background:#d5d5d5"></div><div class="a" style="left:317px;top:379px;width:143px;height:1px;background:#d5d5d5"></div><div class="a" style="left:317px;top:398px;width:143px;height:1px;background:#d5d5d5"></div><div class="a" style="left:317px;top:417px;width:143px;height:1px;background:#d5d5d5"></div><div class="a" style="left:317px;top:436px;width:143px;height:1px;background:#d5d5d5"></div><div class="a" style="left:317px;top:455px;width:143px;height:1px;background:#d5d5d5"></div><div class="a" style="left:317px;top:474px;width:143px;height:1px;background:#d5d5d5"></div><div class="a" style="left:317px;top:493px;width:143px;height:1px;background:#d5d5d5"></div><div class="a" style="left:317px;top:512px;width:143px;height:1px;background:#d5d5d5"></div><div class="a" style="left:317px;top:531px;width:143px;height:1px;background:#d5d5d5"></div><div class="a" style="left:317px;top:550px;width:143px;height:1px;background:#d5d5d5"></div><div class="a" style="left:317px;top:569px;width:143px;height:1px;background:#d5d5d5"></div><div class="a" style="left:315.5px;top:283px;width:2px;height:287px;background:#7e5fb0"></div><div class="a" style="left:315.5px;top:283px;width:74px;height:2px;background:#7e5fb0"></div><div class="a" style="left:315.5px;top:568px;width:74px;height:2px;background:#7e5fb0"></div><div class="a" style="left:388px;top:283px;width:2px;height:287px;background:#7e5fb0"></div><div class="a" style="left:460px;top:283px;width:2px;height:287px;background:#3565b5"></div><div class="a" style="left:389px;top:568px;width:73px;height:2px;background:#3565b5"></div><div class="a" style="left:388px;top:264px;width:74px;height:2px;background:#b23a48"></div><div class="a" style="left:390px;top:282px;width:72px;height:2px;background:#b23a48"></div><div class="a" style="left:388px;top:264px;width:2px;height:20px;background:#b23a48"></div><div class="a" style="left:460px;top:264px;width:2px;height:20px;background:#b23a48"></div><div class="a" style="left:314.0px;top:281.5px;width:5px;height:5px;background:#7e5fb0"></div><div class="a" style="left:386.5px;top:281.5px;width:5px;height:5px;background:#7e5fb0"></div><div class="a" style="left:314.0px;top:566.5px;width:5px;height:5px;background:#7e5fb0"></div><div class="a" style="left:386.5px;top:566.5px;width:5px;height:5px;background:#7e5fb0"></div><div class="a" style="left:386.5px;top:262.5px;width:5px;height:5px;background:#b23a48"></div><div class="a" style="left:458.5px;top:262.5px;width:5px;height:5px;background:#b23a48"></div><div class="a" style="left:458.5px;top:281.0px;width:5px;height:5px;background:#b23a48"></div><div class="a" style="left:458.5px;top:566.5px;width:5px;height:5px;background:#3565b5"></div><div class="t" style="left:320px;top:275.5px;font-size:14px;color:#222;font-weight:normal;transform:translateY(-50%);">温度</div><div class="t" style="left:392px;top:275.5px;font-size:14px;color:#222;font-weight:normal;transform:translateY(-50%);">销量</div><div class="t" style="right:699px;top:294.5px;font-size:14px;color:#222;font-weight:normal;transform:translateY(-50%);">29</div><div class="t" style="right:627px;top:294.5px;font-size:14px;color:#222;font-weight:normal;transform:translateY(-50%);">21104</div><div class="t" style="right:699px;top:370.5px;font-size:14px;color:#222;font-weight:normal;transform:translateY(-50%);">5</div><div class="t" style="right:627px;top:370.5px;font-size:14px;color:#222;font-weight:normal;transform:translateY(-50%);">27870</div><div class="t" style="right:699px;top:389.5px;font-size:14px;color:#222;font-weight:normal;transform:translateY(-50%);">15</div><div class="t" style="right:627px;top:389.5px;font-size:14px;color:#222;font-weight:normal;transform:translateY(-50%);">2513</div><div class="t" style="right:699px;top:408.5px;font-size:14px;color:#222;font-weight:normal;transform:translateY(-50%);">34</div><div class="t" style="right:627px;top:408.5px;font-size:14px;color:#222;font-weight:normal;transform:translateY(-50%);">39141</div><div class="t" style="right:699px;top:427.5px;font-size:14px;color:#222;font-weight:normal;transform:translateY(-50%);">25</div><div class="t" style="right:627px;top:427.5px;font-size:14px;color:#222;font-weight:normal;transform:translateY(-50%);">10118</div><div class="t" style="right:699px;top:465.5px;font-size:14px;color:#222;font-weight:normal;transform:translateY(-50%);">28</div><div class="t" style="right:627px;top:465.5px;font-size:14px;color:#222;font-weight:normal;transform:translateY(-50%);">6981</div><div class="t" style="right:699px;top:503.5px;font-size:14px;color:#222;font-weight:normal;transform:translateY(-50%);">3</div><div class="t" style="right:627px;top:503.5px;font-size:14px;color:#222;font-weight:normal;transform:translateY(-50%);">9358</div><div class="t" style="right:699px;top:522.5px;font-size:14px;color:#222;font-weight:normal;transform:translateY(-50%);">11</div><div class="t" style="right:627px;top:522.5px;font-size:14px;color:#222;font-weight:normal;transform:translateY(-50%);">6148</div><div class="t" style="right:699px;top:541.5px;font-size:14px;color:#222;font-weight:normal;transform:translateY(-50%);">5</div><div class="t" style="right:627px;top:541.5px;font-size:14px;color:#222;font-weight:normal;transform:translateY(-50%);">35846</div><div class="t" style="right:699px;top:560.5px;font-size:14px;color:#222;font-weight:normal;transform:translateY(-50%);">15</div><div class="t" style="right:627px;top:560.5px;font-size:14px;color:#222;font-weight:normal;transform:translateY(-50%);">3408</div><div class="a" style="left:533px;top:437px;width:15px;height:18px;background:#9fc3e7"></div><div class="a" style="left:533px;top:475px;width:15px;height:18px;background:#9fc3e7"></div><svg class="a" style="left:0;top:0" width="1085" height="629"><rect x="548.5" y="287.5" width="479" height="288" fill="#fff" stroke="#8c8c8c" stroke-width="1"/><line x1="597.5" y1="544.5" x2="1007.0" y2="544.5" stroke="#d9d9d9" stroke-width="1"/><line x1="597.5" y1="521.5" x2="1007.0" y2="521.5" stroke="#d9d9d9" stroke-width="1"/><line x1="597.5" y1="499.5" x2="1007.0" y2="499.5" stroke="#d9d9d9" stroke-width="1"/><line x1="597.5" y1="476.5" x2="1007.0" y2="476.5" stroke="#d9d9d9" stroke-width="1"/><line x1="597.5" y1="453.5" x2="1007.0" y2="453.5" stroke="#d9d9d9" stroke-width="1"/><line x1="597.5" y1="430.5" x2="1007.0" y2="430.5" stroke="#d9d9d9" stroke-width="1"/><line x1="597.5" y1="408.5" x2="1007.0" y2="408.5" stroke="#d9d9d9" stroke-width="1"/><line x1="597.5" y1="385.5" x2="1007.0" y2="385.5" stroke="#d9d9d9" stroke-width="1"/><line x1="597.5" y1="362.5" x2="1007.0" y2="362.5" stroke="#d9d9d9" stroke-width="1"/><line x1="597.5" y1="339.5" x2="1007.0" y2="339.5" stroke="#d9d9d9" stroke-width="1"/><line x1="598.5" y1="339.2" x2="598.5" y2="544.7" stroke="#d9d9d9" stroke-width="1"/><line x1="649.5" y1="339.2" x2="649.5" y2="544.7" stroke="#d9d9d9" stroke-width="1"/><line x1="700.5" y1="339.2" x2="700.5" y2="544.7" stroke="#d9d9d9" stroke-width="1"/><line x1="751.5" y1="339.2" x2="751.5" y2="544.7" stroke="#d9d9d9" stroke-width="1"/><line x1="802.5" y1="339.2" x2="802.5" y2="544.7" stroke="#d9d9d9" stroke-width="1"/><line x1="853.5" y1="339.2" x2="853.5" y2="544.7" stroke="#d9d9d9" stroke-width="1"/><line x1="904.5" y1="339.2" x2="904.5" y2="544.7" stroke="#d9d9d9" stroke-width="1"/><line x1="955.5" y1="339.2" x2="955.5" y2="544.7" stroke="#d9d9d9" stroke-width="1"/><line x1="1006.5" y1="339.2" x2="1006.5" y2="544.7" stroke="#d9d9d9" stroke-width="1"/></svg><div class="t" style="right:499px;top:544.2px;font-size:11px;color:#595959;font-weight:normal;transform:translateY(-50%);">0</div><div class="t" style="right:499px;top:521.4222222222222px;font-size:11px;color:#595959;font-weight:normal;transform:translateY(-50%);">5000</div><div class="t" style="right:499px;top:498.6444444444445px;font-size:11px;color:#595959;font-weight:normal;transform:translateY(-50%);">10000</div><div class="t" style="right:499px;top:475.8666666666667px;font-size:11px;color:#595959;font-weight:normal;transform:translateY(-50%);">15000</div><div class="t" style="right:499px;top:453.0888888888889px;font-size:11px;color:#595959;font-weight:normal;transform:translateY(-50%);">20000</div><div class="t" style="right:499px;top:430.31111111111113px;font-size:11px;color:#595959;font-weight:normal;transform:translateY(-50%);">25000</div><div class="t" style="right:499px;top:407.5333333333333px;font-size:11px;color:#595959;font-weight:normal;transform:translateY(-50%);">30000</div><div class="t" style="right:499px;top:384.7555555555556px;font-size:11px;color:#595959;font-weight:normal;transform:translateY(-50%);">35000</div><div class="t" style="right:499px;top:361.97777777777776px;font-size:11px;color:#595959;font-weight:normal;transform:translateY(-50%);">40000</div><div class="t" style="right:499px;top:339.20000000000005px;font-size:11px;color:#595959;font-weight:normal;transform:translateY(-50%);">45000</div><div class="t" style="left:597.5px;top:559.5px;font-size:11px;color:#595959;font-weight:normal;transform:translate(-50%,-50%);">0</div><div class="t" style="left:648.625px;top:559.5px;font-size:11px;color:#595959;font-weight:normal;transform:translate(-50%,-50%);">5</div><div class="t" style="left:699.75px;top:559.5px;font-size:11px;color:#595959;font-weight:normal;transform:translate(-50%,-50%);">10</div><div class="t" style="left:750.875px;top:559.5px;font-size:11px;color:#595959;font-weight:normal;transform:translate(-50%,-50%);">15</div><div class="t" style="left:802.0px;top:559.5px;font-size:11px;color:#595959;font-weight:normal;transform:translate(-50%,-50%);">20</div><div class="t" style="left:853.125px;top:559.5px;font-size:11px;color:#595959;font-weight:normal;transform:translate(-50%,-50%);">25</div><div class="t" style="left:904.25px;top:559.5px;font-size:11px;color:#595959;font-weight:normal;transform:translate(-50%,-50%);">30</div><div class="t" style="left:955.375px;top:559.5px;font-size:11px;color:#595959;font-weight:normal;transform:translate(-50%,-50%);">35</div><div class="t" style="left:1006.5px;top:559.5px;font-size:11px;color:#595959;font-weight:normal;transform:translate(-50%,-50%);">40</div><div class="t" style="left:787.5px;top:309px;font-size:18.5px;color:#595959;font-weight:normal;transform:translate(-50%,-50%);">销量</div><svg class="a" style="left:0;top:0" width="1085" height="629"><circle cx="894.0" cy="448.1" r="3.6" fill="#5b9bd5"/><circle cx="648.6" cy="417.2" r="3.6" fill="#5b9bd5"/><circle cx="750.9" cy="532.8" r="3.6" fill="#5b9bd5"/><circle cx="945.1" cy="365.9" r="3.6" fill="#5b9bd5"/><circle cx="853.1" cy="498.1" r="3.6" fill="#5b9bd5"/><circle cx="883.8" cy="512.4" r="3.6" fill="#5b9bd5"/><circle cx="628.2" cy="501.6" r="3.6" fill="#5b9bd5"/><circle cx="710.0" cy="516.2" r="3.6" fill="#5b9bd5"/><circle cx="648.6" cy="380.9" r="3.6" fill="#5b9bd5"/><circle cx="750.9" cy="528.7" r="3.6" fill="#5b9bd5"/><circle cx="548.5" cy="287.8" r="5" fill="#fff" stroke="#8a8a8a" stroke-width="1.6"/><circle cx="548.5" cy="431.5" r="5" fill="#fff" stroke="#8a8a8a" stroke-width="1.6"/><circle cx="548.5" cy="575.5" r="5" fill="#fff" stroke="#8a8a8a" stroke-width="1.6"/><circle cx="787.5" cy="287.8" r="5" fill="#fff" stroke="#8a8a8a" stroke-width="1.6"/><circle cx="787.5" cy="575.5" r="5" fill="#fff" stroke="#8a8a8a" stroke-width="1.6"/><circle cx="1027.5" cy="287.8" r="5" fill="#fff" stroke="#8a8a8a" stroke-width="1.6"/><circle cx="1027.5" cy="431.5" r="5" fill="#fff" stroke="#8a8a8a" stroke-width="1.6"/><circle cx="1027.5" cy="575.5" r="5" fill="#fff" stroke="#8a8a8a" stroke-width="1.6"/></svg><div class="a" style="left:532px;top:139px;width:170px;height:246px;background:#fff;border:1px solid #c8c8c8;box-sizing:border-box;box-shadow:1px 2px 3px rgba(0,0,0,0.18)"></div><div class="a" style="left:533px;top:140px;width:167px;height:24px;background:#e7e7e7"></div><div class="t s" style="left:542px;top:151.5px;font-size:12px;color:#505050;font-weight:normal;transform:translateY(-50%);">散点图</div><div class="a" style="left:533px;top:164px;width:56px;height:56px;background:#c6c6c6"></div><div class="a" style="left:533px;top:277px;width:167px;height:23px;background:#e7e7e7"></div><div class="t s" style="left:542px;top:288px;font-size:12px;color:#505050;font-weight:normal;transform:translateY(-50%);">气泡图</div><div class="a" style="left:533px;top:356px;width:168px;height:1px;background:#e1e1e1"></div><div class="t s" style="left:565px;top:370px;font-size:12px;color:#333;font-weight:normal;transform:translateY(-50%);">更多散点图(<u>M</u>)...</div><svg class="a" style="left:0;top:0" width="1085" height="629"><path d="M541.5,173 V209.5 H581.0" fill="none" stroke="#707070" stroke-width="1.3"/><circle cx="547.2" cy="177.2" r="2.4" fill="#fff" stroke="#707070" stroke-width="1"/><circle cx="574.5" cy="179.5" r="2.4" fill="#fff" stroke="#707070" stroke-width="1"/><circle cx="555.4" cy="197.5" r="2.4" fill="#fff" stroke="#707070" stroke-width="1"/><circle cx="563.4" cy="202.5" r="2.4" fill="#fff" stroke="#707070" stroke-width="1"/><circle cx="555.4" cy="188.4" r="2.5" fill="#707070"/><circle cx="569.5" cy="193.4" r="2.5" fill="#707070"/><circle cx="546.5" cy="203.4" r="2.5" fill="#707070"/><circle cx="573.4" cy="204.3" r="2.5" fill="#707070"/><path d="M597.5,173 V209.5 H637.0" fill="none" stroke="#707070" stroke-width="1.3"/><path d="M603.4,202.3 C606,193 609,186 613.4,184.3 C619,182 625,186 627.6,191.5 C629,195 628.6,200 628.4,203.2" fill="none" stroke="#707070" stroke-width="1.2"/><path d="M604.5,178.4 C608,188 611,196 614.5,199.2 C617,202 619,203 621.5,203.2 C625,203.5 627,203.5 628.4,203.2 C631,200 632,190 632.3,180.6" fill="none" stroke="#999" stroke-width="0.9"/><circle cx="604.5" cy="178.4" r="2.4" fill="#fff" stroke="#707070" stroke-width="1"/><circle cx="614.5" cy="199.2" r="2.4" fill="#fff" stroke="#707070" stroke-width="1"/><circle cx="621.5" cy="203.2" r="2.4" fill="#fff" stroke="#707070" stroke-width="1"/><circle cx="632.3" cy="180.6" r="2.4" fill="#fff" stroke="#707070" stroke-width="1"/><circle cx="603.4" cy="202.3" r="2.5" fill="#707070"/><circle cx="613.4" cy="184.3" r="2.5" fill="#707070"/><circle cx="627.6" cy="191.5" r="2.5" fill="#707070"/><circle cx="628.4" cy="203.2" r="2.5" fill="#707070"/><path d="M653.5,173 V209.5 H693.0" fill="none" stroke="#707070" stroke-width="1.3"/><path d="M659.6,181.2 C664,192 670,202 677,202 C684,202 686,192 685.2,177.3" fill="none" stroke="#707070" stroke-width="1.2"/><path d="M664.6,205.7 C667,194 673,187 679,187 C686,187 688.5,196 688.6,206.2" fill="none" stroke="#aaa" stroke-width="1"/><path d="M541.4,229 V265.5 H580.9" fill="none" stroke="#707070" stroke-width="1.3"/><path d="M548.6,237.4 L556.5,255.6 L574.6,238.5 M564.5,259.5 L571.5,247.3" fill="none" stroke="#999" stroke-width="0.9"/><path d="M549.4,259.5 L557.4,241.2 L574.5,258.7 L571.5,247.3" fill="none" stroke="#707070" stroke-width="1.2"/><circle cx="548.6" cy="237.4" r="2.4" fill="#fff" stroke="#707070" stroke-width="1"/><circle cx="556.5" cy="255.6" r="2.4" fill="#fff" stroke="#707070" stroke-width="1"/><circle cx="564.5" cy="259.5" r="2.4" fill="#fff" stroke="#707070" stroke-width="1"/><circle cx="574.6" cy="238.5" r="2.4" fill="#fff" stroke="#707070" stroke-width="1"/><circle cx="549.4" cy="259.5" r="2.5" fill="#707070"/><circle cx="557.4" cy="241.2" r="2.5" fill="#707070"/><circle cx="571.5" cy="247.3" r="2.5" fill="#707070"/><circle cx="574.5" cy="258.7" r="2.5" fill="#707070"/><path d="M597.5,229 V265.5 H637.0" fill="none" stroke="#707070" stroke-width="1.3"/><path d="M601.7,233.5 L611.3,254 L626.8,235.1 L619.6,256.7" fill="none" stroke="#aaa" stroke-width="0.9"/><path d="M605.2,259.5 L613.7,244 L629.6,261.1 L626.2,250.1" fill="none" stroke="#707070" stroke-width="1.2"/><path d="M541.4,309 V345.5 H580.9" fill="none" stroke="#707070" stroke-width="1.3"/><circle cx="555.5" cy="318.2" r="6.3" fill="#707070"/><circle cx="567.5" cy="325.3" r="4.4" fill="#707070"/><circle cx="552.5" cy="332.2" r="5.8" fill="#fff" stroke="#707070" stroke-width="1.1"/><circle cx="566.9" cy="336.8" r="4.3" fill="#fff" stroke="#707070" stroke-width="1.1"/><path d="M597.2,309 V345.5 H636.7" fill="none" stroke="#707070" stroke-width="1.3"/><defs><radialGradient id="sph" cx="0.38" cy="0.3" r="0.7"><stop offset="0" stop-color="#f4f4f4"/><stop offset="0.55" stop-color="#9a9a9a"/><stop offset="1" stop-color="#6e6e6e"/></radialGradient></defs><circle cx="614.4" cy="318.2" r="6.4" fill="url(#sph)"/><circle cx="626.6" cy="325.3" r="4.4" fill="url(#sph)"/><circle cx="611.3" cy="332.5" r="6.2" fill="url(#sph)"/><circle cx="625.6" cy="336" r="5" fill="url(#sph)"/><path d="M537.5,361.5 V377.5 H553" fill="none" stroke="#707070" stroke-width="1"/><path d="M540,364 H542 M541,363 V365" stroke="#999" stroke-width="0.8"/><path d="M545,363 H547 M546,362 V364" stroke="#999" stroke-width="0.8"/><path d="M550,365 H552 M551,364 V366" stroke="#999" stroke-width="0.8"/><path d="M542,368 H544 M543,367 V369" stroke="#999" stroke-width="0.8"/><path d="M547,369 H549 M548,368 V370" stroke="#999" stroke-width="0.8"/><path d="M552,368 H554 M553,367 V369" stroke="#999" stroke-width="0.8"/><path d="M539,372 H541 M540,371 V373" stroke="#999" stroke-width="0.8"/><path d="M544,373 H546 M545,372 V374" stroke="#999" stroke-width="0.8"/><path d="M549,373 H551 M550,372 V374" stroke="#999" stroke-width="0.8"/><path d="M543,376 H545 M544,375 V377" stroke="#999" stroke-width="0.8"/><path d="M548,376 H550 M549,375 V377" stroke="#999" stroke-width="0.8"/></svg><div class="a" style="left:160.1px;top:30.900000000000002px;width:40.6px;height:40.6px;border-radius:50%;background:radial-gradient(circle at 45% 35%, #f64546, #ec3a3c);box-shadow:0 2px 3px rgba(0,0,0,0.4)"></div><div class="t" style="left:180.4px;top:51.7px;transform:translate(-50%,-50%);font-size:30.5px;color:#fff;-webkit-text-stroke:0.7px #fff">2</div><div class="a" style="left:575.2px;top:111.2px;width:40.6px;height:40.6px;border-radius:50%;background:radial-gradient(circle at 45% 35%, #f64546, #ec3a3c);box-shadow:0 2px 3px rgba(0,0,0,0.4)"></div><div class="t" style="left:595.5px;top:132.0px;transform:translate(-50%,-50%);font-size:30.5px;color:#fff;-webkit-text-stroke:0.7px #fff">3</div><div class="a" style="left:253.2px;top:395.7px;width:40.6px;height:40.6px;border-radius:50%;background:radial-gradient(circle at 45% 35%, #f64546, #ec3a3c);box-shadow:0 2px 3px rgba(0,0,0,0.4)"></div><svg class="a" style="left:266.0px;top:405px" width="12" height="22" viewBox="0 0 12 22"><path d="M1.5,7 L7.5,1.5 H10.5 V21.5 H7.2 V6 L2.5,9.8 Z" fill="#fff"/></svg><svg class="a" style="left:920px;top:579px" width="40" height="45" viewBox="0 0 40 45"><path d="M19,1 L37,11 V33 L19,43 L1,33 V11 Z" fill="#e35b0e"/><path d="M19,43 L1,33 V30 L19,40 L37,30 V33 Z" fill="#b8470a"/><path d="M11,13 L24,9.5 V34.5 L11,31 Z" fill="#fff"/><path d="M15,15.5 L20,14.5 V29 L15,28 Z" fill="#e35b0e"/><path d="M24,11 L28,12 V32 L24,33 Z" fill="#fff"/></svg><div class="t" style="left:963px;top:596.5px;font-size:19.5px;color:#1a9ee0;font-weight:bold;transform:translateY(-50%);letter-spacing:-0.2px">Office教程网</div><div class="t" style="left:961.5px;top:612.5px;font-size:13.5px;color:#e0620e;font-weight:bold;transform:translateY(-50%);">www.office26.com</div></body></html>
